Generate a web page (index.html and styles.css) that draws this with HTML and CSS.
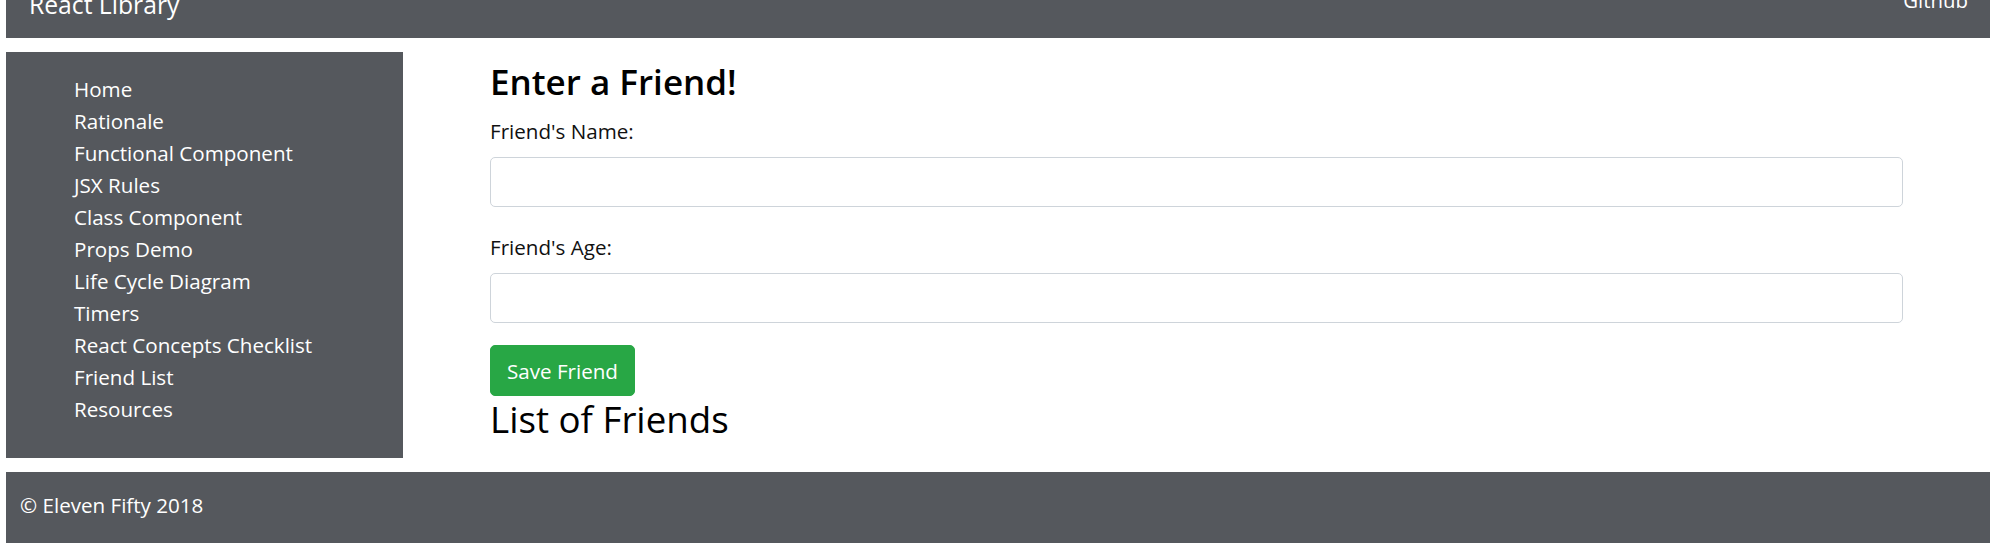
FILE: index.html
```html
<!DOCTYPE html>
<html lang="en">
<head>
<meta charset="utf-8">
<title>React Library</title>
<link rel="stylesheet" href="styles.css">
</head>
<body>
<div class="page">
  <header class="navbar">
    <a class="brand" href="#">React Library</a>
    <a class="nav-link" href="#">Github</a>
  </header>
  <div class="layout">
    <nav class="sidebar">
      <ul class="side-list">
        <li><a href="#">Home</a></li>
        <li><a href="#">Rationale</a></li>
        <li><a href="#">Functional Component</a></li>
        <li><a href="#">JSX Rules</a></li>
        <li><a href="#">Class Component</a></li>
        <li><a href="#">Props Demo</a></li>
        <li><a href="#">Life Cycle Diagram</a></li>
        <li><a href="#">Timers</a></li>
        <li><a href="#">React Concepts Checklist</a></li>
        <li><a href="#">Friend List</a></li>
        <li><a href="#">Resources</a></li>
      </ul>
    </nav>
    <main class="main">
      <h3 class="title-bold">Enter a Friend!</h3>
      <form class="friend-form">
        <div class="form-group">
          <label class="label" for="name">Friend's Name:</label>
          <input class="form-control" id="name" type="text">
        </div>
        <div class="form-group last">
          <label class="label" for="age">Friend's Age:</label>
          <input class="form-control" id="age" type="text">
        </div>
        <button class="btn-success" type="button">Save Friend</button>
      </form>
      <h3 class="title">List of Friends</h3>
    </main>
  </div>
  <footer class="footer">© Eleven Fifty 2018</footer>
</div>
</body>
</html>
```
FILE: styles.css
```css
* { box-sizing: border-box; }
html, body { margin: 0; padding: 0; background: #fff; }
body {
  font-family: "Open Sans", "Noto Sans", sans-serif;
  font-size: 20.6px;
  line-height: 32px;
  color: #111;
  overflow: hidden;
}
a { text-decoration: none; color: inherit; }

.page { padding: 0 3px 0 6px; }

.navbar {
  height: 38px;
  background: #55585d;
  display: flex;
  justify-content: space-between;
  align-items: flex-start;
  padding: 0 22px 0 23px;
  overflow: hidden;
  color: #fff;
}
.brand {
  font-size: 24.7px;
  line-height: 24.7px;
  margin-top: -7px;
}
.nav-link {
  font-size: 20.4px;
  line-height: 20.4px;
  margin-top: -10px;
}

.layout {
  display: flex;
  align-items: flex-start;
  margin: 14px 0;
}
.sidebar {
  width: 397px;
  flex: none;
  background: #55585d;
  padding: 21px 0 33px 68px;
}
.side-list { list-style: none; margin: 0; padding: 0; }
.side-list a { color: #fff; }

.main {
  flex: 1;
  padding: 8px 87px 0;
}
.title-bold, .title {
  margin: 0;
  line-height: 44px;
  color: #000;
}
.title-bold { font-size: 35px; font-weight: 600; }
.title { font-size: 36.7px; font-weight: 400; margin-top: 1px; }

.friend-form { margin: 0; }
.form-group { margin: 11px 0 24px; }
.form-group.last { margin: 0 0 22px; }
.label { display: block; margin-bottom: 10px; }
.form-control {
  display: block;
  width: 100%;
  height: 50px;
  border: 1px solid #ced4da;
  border-radius: 5px;
  font: inherit;
  padding: 0 16px;
  background: #fff;
}
.btn-success {
  display: block;
  font: inherit;
  color: #fff;
  background: #28a745;
  border: 1px solid #28a745;
  border-radius: 5px;
  padding: 8px 16px;
  line-height: 32px;
  height: 51px;
}

.footer {
  background: #55585d;
  color: #fff;
  height: 71px;
  padding: 17px 14px 0;
}
```
